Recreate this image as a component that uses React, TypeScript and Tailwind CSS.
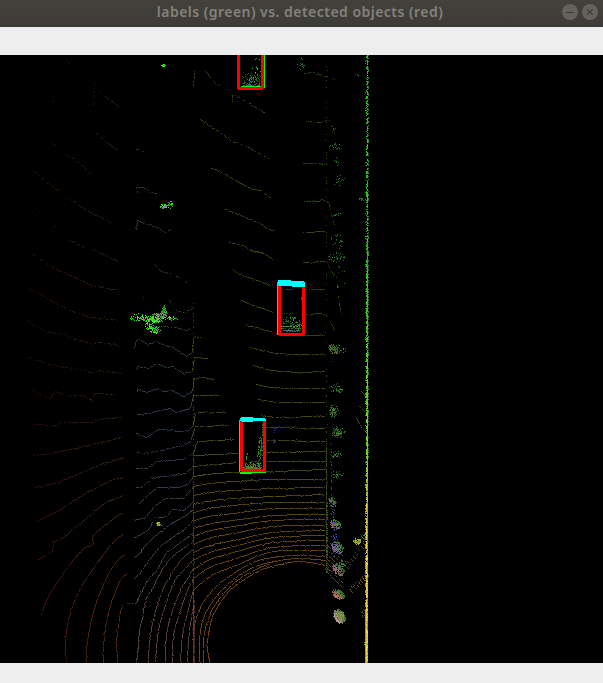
import React from "react";

type RGB = [number, number, number];
type Line = number[];

// Deterministic noise, so that the point cloud is stable between renders.
let seed = 90210;
const rnd = () => {
  seed = (seed + 0x6d2b79f5) | 0;
  let t = Math.imul(seed ^ (seed >>> 15), 1 | seed);
  t = (t + Math.imul(t ^ (t >>> 7), 61 | t)) ^ t;
  return ((t ^ (t >>> 14)) >>> 0) / 4294967296;
};

const layers = new Map<string, string[]>();
const plot = (x: number, y: number, c: RGB, gain = 1) => {
  const q = c.map((v) => Math.max(0, Math.min(255, Math.round((v * gain) / 8) * 8)));
  const key = `rgb(${q.join(",")})`;
  const list = layers.get(key) ?? [];
  list.push(`M${Math.round(x)} ${Math.round(y)}h1v1h-1z`);
  layers.set(key, list);
};

const mix = (a: RGB, b: RGB, t: number): RGB => {
  const k = Math.max(0, Math.min(1, t));
  return [a[0] + (b[0] - a[0]) * k, a[1] + (b[1] - a[1]) * k, a[2] + (b[2] - a[2]) * k];
};

// Ground intensity by place: reddish far left, slate on the shoulder, olive to amber on the road.
const ground = (x: number, y: number): RGB => {
  if (x < 130) return mix(mix([44, 10, 18], [72, 14, 18], (y - 420) / 200), mix([46, 40, 16], [80, 42, 14], (y - 380) / 220), (x - 35) / 85);
  if (x < 192) return mix(mix([40, 56, 60], [48, 58, 78], (y - 300) / 120), [88, 60, 66], (y - 460) / 160);
  return mix(mix([46, 70, 16], [70, 72, 20], (y - 330) / 130), [108, 68, 22], (y - 460) / 100);
};

const trace = (p: Line, density: number, color?: RGB) => {
  for (let i = 0; i + 3 < p.length; i += 2) {
    const dx = p[i + 2] - p[i];
    const dy = p[i + 3] - p[i + 1];
    const n = Math.max(1, Math.abs(dx), Math.abs(dy));
    for (let s = 0; s < n; s++) {
      if (rnd() > density) continue;
      const x = p[i] + (dx * s) / n;
      const y = p[i + 1] + (dy * s) / n;
      const j = rnd() < 0.08 ? (rnd() < 0.5 ? -1 : 1) : 0;
      const c = color ?? ground(x, y);
      const flat = Math.abs(dx) > Math.abs(dy);
      plot(x + (flat ? 0 : j), y + (flat ? j : 0), c, 0.82 + rnd() * 0.3);
    }
  }
};

const smooth = (p: Line): Line => {
  const out: Line = [];
  for (let i = 0; i + 3 < p.length; i += 2) {
    const g = (k: number, o: number) => p[Math.max(o, Math.min(p.length - 2 + o, k + o))];
    for (let s = 0; s < 6; s++) {
      const t = s / 6;
      for (let o = 0; o < 2; o++) {
        const a = g(i - 2, o), b = g(i, o), c = g(i + 2, o), d = g(i + 4, o);
        out.push(0.5 * (2 * b + (c - a) * t + (2 * a - 5 * b + 4 * c - d) * t * t + (3 * b - a - 3 * c + d) * t * t * t));
      }
    }
  }
  out.push(p[p.length - 2], p[p.length - 1]);
  return out;
};

const blob = (cx: number, cy: number, rx: number, ry: number, n: number, palette: RGB[]) => {
  for (let i = 0; i < n; i++) {
    const a = rnd() * Math.PI * 2;
    const r = Math.pow(rnd(), 0.7);
    plot(cx + Math.cos(a) * r * rx, cy + Math.sin(a) * r * ry, palette[Math.floor(rnd() * palette.length)], 0.75 + rnd() * 0.35);
  }
};

// Bush lit from the lower left: pale mauve core that turns green to the upper right.
const bush = (cx: number, cy: number, rx: number, ry: number, n: number, core: RGB) => {
  for (let i = 0; i < n; i++) {
    const a = rnd() * Math.PI * 2;
    const r = Math.pow(rnd(), 0.6);
    const u = Math.cos(a) * r;
    const v = Math.sin(a) * r;
    const t = 0.5 + (u - v) * 0.5 + (rnd() - 0.5) * 0.5;
    plot(cx + u * rx, cy + (v + u * 0.35) * ry, mix(core, [46, 120, 36], t), 0.8 + rnd() * 0.3);
  }
};

const sparse: Line[] = [
  [67, 61, 75, 67], [94, 82, 93, 105], [53, 92, 52, 102], [51, 143, 58, 146],
  [30, 210, 40, 219], [55, 222, 51, 234], [136, 149, 142, 149, 146, 155],
  [194, 71, 193, 86], [205, 71, 215, 83, 229, 90], [136, 297, 140, 298, 145, 296],
  [165, 303, 168, 299, 171, 303], [327, 119, 335, 134], [328, 202, 335, 230],
  [330, 235, 334, 246], [326, 261, 334, 277], [337, 290, 341, 315], [327, 315, 334, 330],
  [328, 357, 335, 368], [193, 302, 193, 480], [232, 95, 232, 103],
];

const medium: Line[] = [
  [99, 90, 107, 98, 120, 107], [96, 133, 108, 143, 118, 150], [65, 154, 75, 159, 86, 169, 91, 176],
  [31, 168, 47, 182, 62, 193, 80, 206, 97, 216, 103, 218, 113, 224],
  [63, 234, 69, 240, 84, 247], [93, 249, 103, 254, 118, 261],
  [33, 254, 50, 266, 72, 276, 92, 285, 117, 290],
  [28, 287, 52, 301, 72, 311, 90, 317, 119, 320],
  [27, 321, 50, 332, 62, 333, 72, 338, 90, 343, 100, 342, 119, 345],
  [28, 357, 52, 365, 77, 369, 92, 372, 98, 370, 121, 373],
  [31, 390, 50, 398, 54, 391, 66, 395, 83, 395, 91, 400, 94, 393, 117, 394],
  [32, 424, 57, 425, 60, 422, 94, 422, 98, 419, 121, 417],
  [137, 193, 136, 187, 143, 187, 150, 192, 159, 194],
  [136, 229, 137, 220, 146, 224, 155, 226, 164, 232, 171, 229],
  [151, 266, 154, 264, 161, 271, 172, 274, 181, 278, 187, 283],
  [176, 310, 182, 312, 193, 308],
  [147, 325, 160, 326, 175, 327, 186, 330, 191, 328],
  [232, 94, 250, 104, 267, 114], [200, 119, 215, 129, 232, 141, 245, 145, 258, 153, 269, 158],
  [304, 73, 313, 72, 322, 75, 330, 77, 335, 80], [303, 121, 322, 122, 327, 119],
  [303, 163, 314, 163, 327, 164], [281, 313, 297, 313],
];

const dense: Line[] = [
  [211, 168, 222, 172, 237, 181, 253, 189, 260, 190, 271, 198],
  [225, 209, 243, 216, 262, 224, 267, 229, 274, 230],
  [229, 242, 242, 245, 252, 251, 264, 253], [250, 250, 262, 252, 274, 260],
  [233, 269, 237, 273, 257, 280, 274, 286], [241, 300, 250, 304, 262, 308, 273, 312],
  [245, 325, 257, 327, 273, 332, 278, 333], [250, 347, 262, 350, 275, 353, 297, 354, 325, 354],
  [253, 365, 270, 370, 297, 372, 325, 371], [256, 384, 270, 387, 290, 388, 325, 388],
  [258, 399, 275, 402, 325, 402], [261, 415, 275, 417, 325, 416],
  [265, 427, 326, 428], [267, 440, 327, 441], [286, 289, 294, 289],
  [303, 201, 317, 201, 322, 199, 328, 202], [303, 232, 325, 231], [303, 262, 326, 261],
  [303, 289, 326, 289], [304, 314, 320, 313, 327, 315], [303, 335, 325, 335],
  [134, 347, 135, 341, 138, 338, 147, 344, 155, 341, 165, 345, 173, 347, 180, 352, 186, 355, 192, 352, 193, 337, 201, 337],
  [136, 370, 137, 366, 148, 368, 156, 363, 166, 367, 173, 366, 182, 373, 192, 371, 194, 357, 208, 358],
  [136, 393, 137, 389, 146, 392, 157, 388, 163, 391, 172, 390, 182, 396, 192, 391, 194, 378, 203, 377, 214, 379],
  [137, 414, 150, 413, 155, 411, 170, 408, 175, 412, 190, 408, 193, 395, 219, 395],
  [136, 433, 146, 437, 158, 429, 163, 429, 178, 431, 188, 430, 193, 425, 195, 412, 226, 412],
  [136, 452, 147, 453, 160, 450, 182, 445, 190, 441, 195, 426, 229, 425],
  [33, 455, 50, 453, 75, 448, 96, 443, 108, 440, 121, 437],
  [34, 487, 58, 482, 91, 468, 103, 463, 124, 457],
  [36, 521, 60, 509, 85, 493, 112, 479, 124, 477],
  [37, 560, 52, 551, 53, 542, 62, 538, 81, 522, 105, 502, 123, 495],
  [136, 468, 145, 468, 152, 465, 156, 461, 182, 459, 193, 453, 197, 441, 234, 439],
  [136, 487, 141, 487, 146, 482, 153, 477, 165, 476, 185, 473, 193, 466],
  [139, 503, 147, 495, 157, 487, 165, 487, 178, 487, 187, 484, 193, 476],
  [134, 519, 144, 518, 155, 505, 165, 498, 183, 498, 193, 486],
  [155, 518, 166, 516, 172, 509, 184, 510, 193, 501],
];

const arcs: Line[] = [
  [41, 614, 48, 596, 65, 570, 82, 549, 92, 544, 94, 534, 116, 516, 122, 513],
  [66, 662, 65, 640, 70, 612, 80, 588, 93, 568, 110, 545, 122, 534],
  [86, 662, 87, 640, 95, 605, 110, 570, 125, 553],
  [103, 662, 104, 635, 110, 605, 120, 580, 127, 574],
  [134, 537, 142, 533, 149, 528, 152, 521],
  [134, 557, 140, 552, 145, 545, 158, 533, 170, 524, 185, 515, 193, 509],
  [134, 578, 140, 572, 150, 558, 160, 546, 172, 537, 185, 528, 193, 519],
  [137, 600, 142, 589, 148, 579, 157, 569, 165, 554, 175, 546, 193, 532],
  [136, 662, 138, 645, 139, 630, 142, 618, 145, 600, 152, 588, 160, 572, 170, 558, 180, 550, 193, 541],
  [148, 662, 149, 640, 155, 610, 163, 588, 172, 572, 182, 558, 193, 549],
  [155, 662, 158, 630, 165, 605, 173, 583, 182, 571, 193, 559],
  [165, 662, 166, 635, 172, 610, 180, 590, 187, 578, 193, 568],
  [172, 662, 173, 635, 180, 610, 187, 590, 193, 578],
  [180, 662, 182, 635, 188, 608, 193, 590],
  [187, 662, 189, 630, 193, 606],
];

// Heights of the road rings at x = 193, 233, 273 and 325.
const rings: number[][] = [
  [455, 453, 452, 451], [466, 462, 461, 461], [476, 472, 471, 469], [486, 481, 479, 479],
  [495, 490, 488, 487], [504, 498, 496, 494], [512, 505, 502, 502], [520, 513, 508, 508],
  [528, 520, 515, 514], [536, 526, 520, 519], [544, 533, 526, 525], [552, 540, 532, 530],
  [560, 546, 537, 535], [569, 552, 542, 540], [578, 559, 547, 545], [590, 566, 551, 550],
];

const inner: Line[] = [
  [193, 650, 194, 625, 202, 603, 215, 587, 233, 573, 255, 561, 280, 556, 300, 555, 325, 556],
  [199, 662, 199, 640, 203, 618, 215, 597, 233, 579, 255, 566, 280, 560, 300, 558, 325, 560],
  [203, 662, 203, 642, 207, 620, 217, 601, 233, 583, 255, 569, 268, 564],
  [209, 662, 207, 645, 209, 628, 213, 614, 222, 599, 233, 587, 257, 571, 280, 564, 300, 561, 325, 565],
];

const G: RGB[] = [[38, 160, 30], [30, 110, 40], [60, 120, 30], [30, 80, 50]];
const BRIGHT: RGB[] = [[50, 230, 20], [40, 255, 70], [60, 200, 50], [90, 255, 20]];

sparse.forEach((p) => trace(p, 0.36));
trace([326, 66, 326, 445], 0.16);
medium.forEach((p) => trace(p, 0.6));
dense.forEach((p) => trace(p, 0.86));
arcs.forEach((p) => trace(smooth(p), 0.9));
trace([117, 662, 116, 640, 120, 610, 122, 606], 0.95);
trace([122, 605, 128, 603, 136, 603, 137, 600], 0.6);
rings.forEach(([a, b, c, d]) => {
  const full = smooth([193, a, 210, (a + b) / 2 - (a - b) * 0.1, 233, b, 273, c, 325, d]);
  if (b < 470) {
    trace([193, a, 238, b], 0.9);
    trace([267, c, 326, d], 0.9);
  } else trace(full, 0.95);
});
inner.forEach((p) => trace(smooth(p), 0.92));

trace([193, 455, 193, 590], 0.8, [54, 64, 28]);
trace([193, 590, 193, 663], 0.9, [108, 56, 42]);
trace([194, 600, 194, 663], 0.7, [92, 48, 38]);
trace([326, 445, 326, 573], 0.95, [54, 80, 24]);
trace([327, 500, 327, 573], 0.5, [66, 84, 34]);
trace([331, 440, 331, 520], 0.35, [40, 90, 50]);
for (let i = 0; i < 8; i++) trace([326, 540 + i * 4.5, 333, 546 + i * 4.5, 343, 556 + i * 4.5], 0.7, [84, 78, 32]);
for (let i = 0; i < 10; i++) {
  trace([342 + i * 2.5, 568 - i * 3.3, 346 + i * 2.5, 572 - i * 3.3], 0.75, [92, 84, 34]);
  if (i < 9) trace([349 + i * 2.1, 588 - i * 2, 352 + i * 2.1, 593 - i * 2], 0.8, [108, 82, 34]);
}

// Roadside vegetation, top to bottom.
[
  [333, 128, 3, 4, 9], [335, 146, 6, 4, 20], [336, 162, 3, 5, 12], [339, 181, 6, 6, 15], [336, 214, 5, 4, 12],
  [338, 241, 6, 8, 20], [336, 257, 9, 5, 34], [339, 277, 6, 12, 12], [301, 64, 5, 6, 14], [357, 74, 4, 2, 6],
  [361, 199, 3, 1.5, 16], [338, 349, 10, 5, 44], [336, 388, 7, 5, 34], [333, 410, 5, 7, 40], [338, 432, 7, 6, 48],
  [336, 454, 6, 4, 24], [337, 474, 6, 4, 32],
].forEach(([x, y, rx, ry, n]) => blob(x, y, rx, ry, n, G));
bush(333, 349, 5, 5, 60, [120, 90, 60]);
bush(333, 411, 4, 5, 30, [100, 100, 70]);
bush(337, 432, 5, 4, 30, [90, 90, 60]);
bush(332, 502, 4, 5, 60, [130, 80, 110]);
bush(335, 524, 6, 5, 120, [160, 100, 120]);
bush(337, 547, 6, 6, 170, [130, 100, 170]);
bush(338, 569, 6, 6, 140, [170, 100, 140]);
bush(338, 594, 6, 4.5, 190, [190, 110, 90]);
bush(339, 616, 6, 6.5, 380, [180, 140, 150]);
blob(340, 615, 4, 5, 110, [[130, 150, 60], [140, 140, 70]]);
blob(342, 563, 4, 4, 24, [[50, 130, 50]]);
blob(334, 536, 3, 24, 34, [[40, 80, 200], [60, 70, 180]]);
blob(333, 512, 2, 14, 12, [[40, 90, 160]]);
blob(357, 541, 4, 3, 60, [[180, 190, 50], [120, 160, 40], [210, 150, 50]]);
blob(363, 538, 3, 4, 12, [[40, 120, 200], [40, 170, 50]]);
blob(363, 613, 2, 5, 14, [[92, 74, 30]]);
trace([361, 391, 366, 397], 0.9, [50, 80, 20]);
trace([359, 406, 366, 413], 0.8, [64, 70, 24]);
trace([356, 418, 362, 428], 0.8, [56, 72, 24]);

// Vegetation on the left shoulder.
blob(163, 65, 2.2, 1.4, 16, BRIGHT);
blob(163, 206, 3.5, 2.5, 26, BRIGHT);
blob(168, 205, 5, 3, 26, BRIGHT);
blob(171, 202, 2, 3, 6, BRIGHT);
blob(166, 206, 3, 1.5, 12, [[150, 150, 150]]);
blob(138, 317, 8, 4, 44, BRIGHT);
blob(148, 319, 8, 3, 50, BRIGHT);
blob(157, 319, 7, 4, 80, BRIGHT);
blob(170, 318, 8, 2, 26, BRIGHT);
blob(164, 312, 3, 7, 60, [[50, 200, 50], [60, 110, 60]]);
blob(149, 327, 5, 5, 46, BRIGHT);
blob(156, 330, 5, 4, 40, BRIGHT);
blob(158, 315, 7, 3, 60, [[120, 140, 90], [150, 140, 130], [80, 130, 70]]);
blob(157, 523, 2, 2, 16, [[90, 230, 20], [200, 220, 20]]);
blob(159, 524, 2, 1.5, 14, [[230, 160, 40], [210, 110, 40]]);

// Points that fall on the vehicles.
blob(251, 80, 11, 8, 100, G);
blob(257, 68, 6, 12, 14, BRIGHT.concat(G));
trace([242, 85, 261, 85], 0.7, [60, 130, 110]);
trace([242, 84, 261, 84], 0.4, [60, 110, 110]);
blob(291, 321, 9, 6, 50, G);
trace([286, 317, 297, 317], 0.7, [50, 150, 20]);
trace([281, 326, 300, 326], 0.95, [50, 170, 20]);
trace([281, 328, 300, 328], 0.8, [70, 120, 50]);
trace([283, 330, 299, 330], 0.95, [90, 110, 120]);
trace([285, 331, 298, 331], 0.8, [70, 80, 90]);
blob(299, 327, 3, 5, 24, G);
blob(301, 297, 1, 9, 4, G);
trace([262, 424, 261, 447, 259, 462], 0.8, [60, 110, 20]);
trace([260, 437, 257, 458], 0.7, [50, 150, 20]);
blob(260, 449, 2.5, 13, 40, G);
trace([247, 447, 246, 461], 0.4, [40, 170, 20]);
blob(253, 465, 9, 4, 100, [[60, 140, 20], [90, 100, 40], [50, 170, 20]]);
trace([243, 467, 262, 467], 0.95, [120, 100, 64]);
trace([244, 468, 262, 468], 0.95, [120, 104, 80]);
blob(274, 430, 1.5, 2, 4, [[40, 60, 140]]);
blob(274, 441, 1.5, 2, 5, [[40, 60, 140]]);
blob(230, 439, 2, 3, 5, [[50, 50, 90]]);

// The barrier: broken green returns far away, solid amber close to the sensor.
for (let y = 55; y < 663; y++) {
  const near = (y - 55) / 608;
  const keep = y < 240 ? 0.66 : 0.97;
  const tone = mix(mix([40, 205, 30], [120, 225, 40], (y - 280) / 170), [238, 196, 48], (y - 450) / 90);
  if (rnd() < keep) plot(367, y, tone, 0.8 + rnd() * 0.3);
  if (rnd() < 0.3 + near * 0.7) plot(366, y, y > 500 ? [250, 220, 80] : tone, 0.8 + rnd() * 0.25);
  if (y > 470) plot(367, y, mix([180, 180, 40], [246, 100, 80], (y - 470) / 70), 0.85 + rnd() * 0.2);
  if (y < 460 && rnd() < 0.38) plot(368, y, [50, 130, 50], 0.8 + rnd() * 0.3);
  if ((y > 505 && rnd() < 0.6) || y > 610 || rnd() < 0.06) plot(365, y, y > 500 ? [200, 200, 50] : tone, 0.8);
}
blob(366, 395, 1.2, 4, 12, [[120, 190, 50]]);
blob(365, 485, 1, 4, 10, [[180, 200, 50]]);
blob(365, 643, 1, 4, 10, [[110, 230, 40]]);

const cloud = Array.from(layers.entries());

const PointCloud = () => (
  <svg className="block h-[608px] w-[603px] shrink-0 bg-black" viewBox="0 55 603 608" shapeRendering="crispEdges">
    {cloud.map(([fill, d]) => (
      <path key={fill} fill={fill} d={d.join("")} />
    ))}
    <path fill="#00ff00" d="M264 55h1v33h-1zM241 86h21v1h-21zM277 282h1v53h-1zM239 420h1v52h-1zM240 472h26v1h-26zM240 473h12v1h-12z" />
    <path fill="#ff0000" d="M237 55h3v32h21v-32h3v34h-1v1h-25v-1h-1zM278 284h3v49h21v-49h3v51h-1v1h-25v-1h-1zM240 420h3v49h20v-49h3v51h-1v1h-24v-1h-1z" />
    <path fill="#00ffff" d="M278 280h13v1h13v1h1v5h-13v-1h-14zM241 417h12v1h12v1h1v2h-13v1h-11v-1h-2v-3h1z" />
    <path fill="#20d830" d="M303 282h1v2h-1zM240 419h1v1h-1z" />
  </svg>
);

const WindowButton = ({ children }: { children: React.ReactNode }) => (
  <span className="flex size-4 items-center justify-center rounded-full bg-[#64625c]">
    <svg className="size-4" viewBox="0 0 16 16" fill="none" stroke="#3c3b37" strokeWidth="1.1">
      {children}
    </svg>
  </span>
);

export default function App() {
  return (
    <div className="flex h-[683px] w-[603px] flex-col overflow-hidden bg-[#eeeeee]">
      <header className="grid h-[27px] shrink-0 grid-cols-[1fr_auto_1fr] items-start bg-linear-to-b from-[#42413c] to-[#3c3b37]">
        <span />
        <h1 className="pt-0.5 pr-[3px] font-['Noto_Sans',sans-serif] text-[14px] leading-5 font-semibold tracking-[0.47px] whitespace-nowrap text-[#85827b]">
          labels (green) vs. detected objects (red)
        </h1>
        <div className="flex justify-end gap-1 pt-1 pr-[5px]">
          <WindowButton>
            <path d="M4 8.5h8" />
          </WindowButton>
          <WindowButton>
            <path d="M5.3 5.3l5.4 5.4M10.7 5.3l-5.4 5.4" />
          </WindowButton>
        </div>
      </header>
      <div className="h-7 shrink-0 bg-[#eeeeee]" />
      <PointCloud />
      <div className="h-5 shrink-0 bg-[#eeeeee]" />
    </div>
  );
}
